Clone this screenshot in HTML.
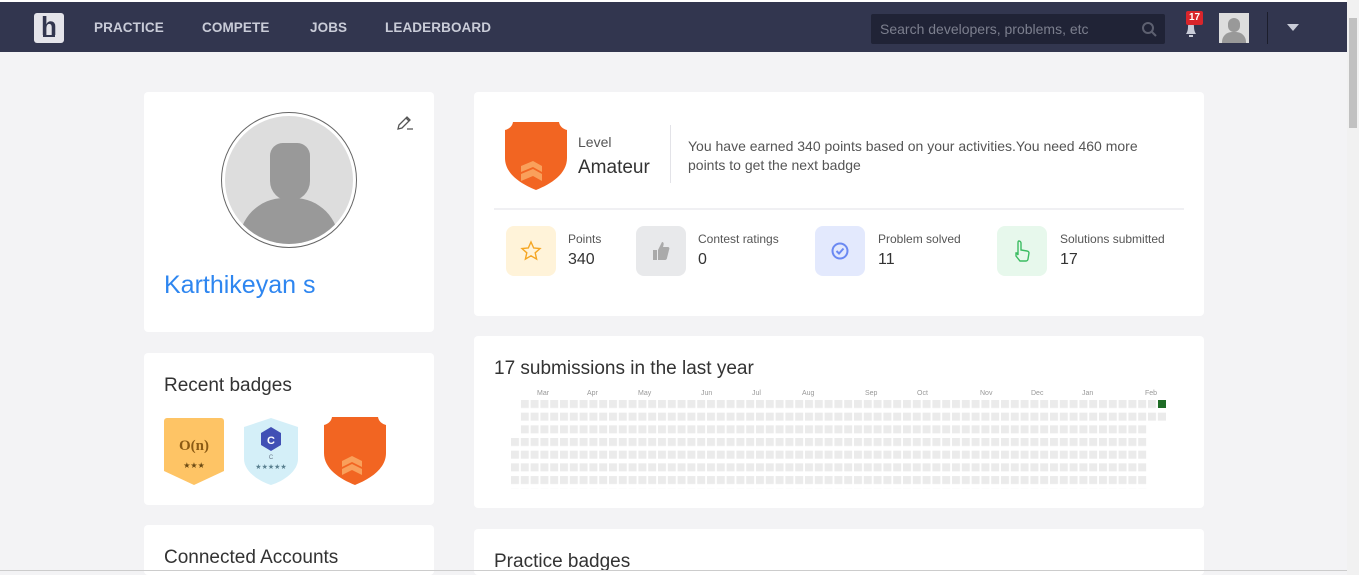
<!DOCTYPE html>
<html style="height:575px;overflow:hidden"><head><meta charset="utf-8"><style>
*{box-sizing:border-box;margin:0;padding:0}
body{width:1359px;height:575px;overflow:hidden;background:#f3f3f5;font-family:"Liberation Sans",sans-serif;position:relative;color:#333}
.nav{position:absolute;left:0;top:0;width:1347px;height:52px;background:#32364f;border-top:2px solid #fff}
.nav a{position:absolute;top:18px;color:#c9ccd8;font-weight:bold;font-size:13.5px;letter-spacing:.1px}
.logo{position:absolute;left:34px;top:11px;width:30px;height:30px;background:#e4e4ea;border-radius:3px;color:#32364f;font-size:26px;font-weight:bold;text-align:center;line-height:26px}
.search{position:absolute;left:871px;top:12px;width:294px;height:30px;background:#202336;border-radius:2px;color:#7c7f8e;font-size:14px;padding:7px 9px}
.card{position:absolute;background:#fff;border-radius:4px}
.sb{position:absolute;left:1347px;top:0;width:12px;height:575px;background:#f1f1f1}
.sb i{position:absolute;left:2px;top:18px;width:8px;height:110px;background:#c1c1c1}
.h{font-size:19px;color:#333;position:absolute}
.stat{position:absolute;top:226px;width:50px;height:50px;border-radius:8px}
.sl{position:absolute;top:232px;font-size:12px;color:#555}
.sv{position:absolute;top:251px;font-size:16px;color:#333}
</style></head><body>
<div class="nav">
<div class="logo">h<div style="position:absolute;left:9px;top:22px;width:12px;height:2px;background:#32364f"></div></div>
<a style="left:94px">PRACTICE</a><a style="left:202px">COMPETE</a><a style="left:310px">JOBS</a><a style="left:385px">LEADERBOARD</a>
<div class="search">Search developers, problems, etc
<svg style="position:absolute;right:8px;top:8px" width="15" height="15" viewBox="0 0 15 15"><circle cx="6" cy="6" r="5" fill="none" stroke="#5d6070" stroke-width="2"/><path d="M10 10l4 4" stroke="#5d6070" stroke-width="2"/></svg></div>
<svg style="position:absolute;left:1184px;top:20px" width="14" height="16"><path d="M2 12 Q4 9 4 5 Q4 1 7 1 Q10 1 10 5 Q10 9 12 12Z M5 13h4v2h-4z" fill="#c9ccd8"/></svg>
<div style="position:absolute;left:1186px;top:9px;width:17px;height:14px;background:#d9252b;border-radius:2px;color:#fff;font-size:10px;font-weight:bold;text-align:center;line-height:14px">17</div>
<div style="position:absolute;left:1219px;top:11px;width:30px;height:30px;background:#ddd;overflow:hidden"><div style="position:absolute;left:9px;top:5px;width:12px;height:14px;border-radius:6px;background:#999"></div><div style="position:absolute;left:3px;top:19px;width:24px;height:16px;border-radius:10px 10px 0 0;background:#999"></div></div>
<div style="position:absolute;left:1267px;top:10px;width:1px;height:32px;background:#1c1e2c"></div>
<div style="position:absolute;left:1287px;top:22px;border-left:6px solid transparent;border-right:6px solid transparent;border-top:7px solid #c9ccd8"></div>
</div>
<div class="sb"><i></i></div>

<div class="card" style="left:144px;top:92px;width:290px;height:240px">
<div style="position:absolute;left:77px;top:20px;width:136px;height:136px;border-radius:50%;border:1px solid #666;padding:3px"><div style="width:128px;height:128px;border-radius:50%;background:#ddd;overflow:hidden;position:relative"><div style="position:absolute;left:45px;top:27px;width:40px;height:58px;border-radius:14px 14px 22px 22px;background:#999"></div><div style="position:absolute;left:14px;top:82px;width:100px;height:60px;border-radius:45px 45px 0 0;background:#999"></div></div></div>
<svg style="position:absolute;left:253px;top:23px" width="18" height="16" viewBox="0 0 18 16"><path d="M1 14l1-4 8-8 3 3-8 8z M9 3l3 3 M10 14h6" fill="none" stroke="#555" stroke-width="1.3"/></svg>
<div style="position:absolute;left:20px;top:179px;font-size:25px;color:#2e86f0">Karthikeyan s</div>
</div>

<div class="card" style="left:144px;top:353px;width:290px;height:152px">
<div class="h" style="left:20px;top:22px">Recent badges</div>
<svg style="position:absolute;left:20px;top:64px" width="62" height="70"><path d="M3 1h54a3 3 0 0 1 3 3v50l-30 14-30-14V4a3 3 0 0 1 3-3z" fill="#fec465"/><text x="30" y="33" font-size="15" font-family="Liberation Serif" font-weight="bold" fill="#8b5a14" text-anchor="middle">O(n)</text><text x="30" y="51" font-size="8" fill="#6b4a14" text-anchor="middle">★★★</text></svg>
<svg style="position:absolute;left:99px;top:64px" width="60" height="70"><path d="M28 1l27 9v32c0 12-14 22-27 26C15 64 1 54 1 42V10z" fill="#d4eff8"/><path d="M28 10l10 6v12l-10 6-10-6V16z" fill="#4150b5"/><text x="28" y="27" font-size="11" font-weight="bold" fill="#fff" text-anchor="middle">C</text><text x="28" y="42" font-size="6" fill="#678" text-anchor="middle">C</text><text x="28" y="52" font-size="7" fill="#5a8090" text-anchor="middle">★★★★★</text></svg>
<svg style="position:absolute;left:180px;top:64px" width="62" height="70"><path d="M8 0H54Q55 6 62 8V36C62 52 46 62 31 68C16 62 0 52 0 36V8Q7 6 8 0Z" fill="#f26522"/><path d="M18 52l10-5 10 5v6l-10-5-10 5zM18 44l10-5 10 5v6l-10-5-10 5z" fill="#f9a05b"/></svg>
</div>

<div class="card" style="left:144px;top:525px;width:290px;height:50px"><div class="h" style="left:20px;top:22px">Connected Accounts</div></div>

<div class="card" style="left:474px;top:92px;width:730px;height:224px">
<svg style="position:absolute;left:31px;top:30px" width="62" height="70"><path d="M8 0H54Q55 6 62 8V36C62 52 46 62 31 68C16 62 0 52 0 36V8Q7 6 8 0Z" fill="#f26522"/><path d="M16 52l12-5 9 5v7l-9-5-12 5zM16 44l12-5 9 5v6l-9-5-12 5z" fill="#f9a05b"/></svg>
<div style="position:absolute;left:104px;top:42px;font-size:14px;color:#555">Level</div>
<div style="position:absolute;left:104px;top:65px;font-size:19px;color:#333">Amateur</div>
<div style="position:absolute;left:196px;top:33px;width:1px;height:58px;background:#e3e3e8"></div>
<div style="position:absolute;left:214px;top:45px;width:490px;font-size:14px;line-height:19px;color:#555">You have earned 340 points based on your activities.You need 460 more points to get the next badge</div>
<div style="position:absolute;left:20px;top:116px;width:690px;height:2px;background:#f0f0f3"></div>
</div>
<div class="stat" style="left:506px;background:#fff3d9"><svg style="margin:14px" width="22" height="22" viewBox="0 0 22 22"><path d="M11 2l2.7 6 6.3.6-4.8 4.2 1.4 6.3L11 15.8 5.4 19.1l1.4-6.3L2 8.6 8.3 8z" fill="none" stroke="#f5a623" stroke-width="1.4"/></svg></div>
<div class="sl" style="left:568px">Points</div><div class="sv" style="left:568px">340</div>
<div class="stat" style="left:636px;background:#e8e9eb"><svg style="margin:14px" width="22" height="22" viewBox="0 0 22 22"><path d="M3 10h4v10H3z M8 10l4-8c2 0 2 2 1 5h5c1 0 2 1 1 3l-2 8c0 1-1 2-2 2H8z" fill="#aaa"/></svg></div>
<div class="sl" style="left:698px">Contest ratings</div><div class="sv" style="left:698px">0</div>
<div class="stat" style="left:815px;background:#e3e9fd"><svg style="margin:15px" width="20" height="20" viewBox="0 0 20 20"><circle cx="10" cy="10" r="7.5" fill="none" stroke="#6b89f2" stroke-width="2"/><path d="M6.5 10l2.5 2.5 4.5-5" fill="none" stroke="#6b89f2" stroke-width="2"/></svg></div>
<div class="sl" style="left:878px">Problem solved</div><div class="sv" style="left:878px">11</div>
<div class="stat" style="left:997px;background:#e7f8ec"><svg style="margin:13px" width="24" height="24" viewBox="0 0 24 24"><path d="M9 2c1 0 2 1 2 2v7l6 1c1 0 2 1 2 2l-1 6c0 1-1 2-2 2h-6l-4-5 0-3 1 0 1 2V4c0-1 0-2 1-2z" fill="none" stroke="#3cbc62" stroke-width="1.4"/></svg></div>
<div class="sl" style="left:1060px">Solutions submitted</div><div class="sv" style="left:1060px">17</div>

<div class="card" style="left:474px;top:336px;width:730px;height:172px">
<div class="h" style="left:20px;top:22px">17 submissions in the last year</div>
<svg style="position:absolute;left:0;top:0" width="730" height="172">
<defs><pattern id="p" x="37" y="64" width="9.8" height="12.67" patternUnits="userSpaceOnUse"><rect width="8" height="8" fill="#ebebeb"/></pattern></defs>
<rect x="37" y="64" width="646.8" height="88.7" fill="url(#p)"/>
<rect x="37" y="64" width="9.8" height="38" fill="#fff"/>
<rect x="674" y="89" width="10" height="64" fill="#fff"/>
<rect x="684" y="64" width="8" height="8" fill="#1e6b25"/>
<rect x="684" y="76.67" width="8" height="8" fill="#ebebeb"/>
<g font-size="7" fill="#999" font-family="Liberation Sans"><text x="63" y="59">Mar</text><text x="113" y="59">Apr</text><text x="164" y="59">May</text><text x="227" y="59">Jun</text><text x="278" y="59">Jul</text><text x="328" y="59">Aug</text><text x="391" y="59">Sep</text><text x="443" y="59">Oct</text><text x="506" y="59">Nov</text><text x="557" y="59">Dec</text><text x="608" y="59">Jan</text><text x="671" y="59">Feb</text></g>
</svg>
</div>

<div class="card" style="left:474px;top:529px;width:730px;height:46px"><div class="h" style="left:20px;top:22px">Practice badges</div></div>
<div style="position:absolute;left:0;top:570px;width:1347px;height:1px;background:#ccc"></div>
</body></html>
